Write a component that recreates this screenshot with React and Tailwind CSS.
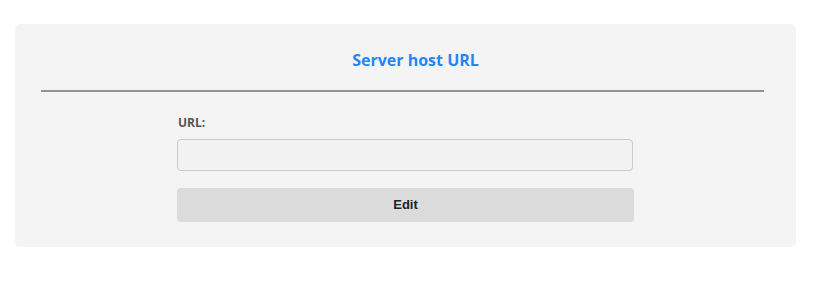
import React from 'react';

const App = () => {
  return (
    <div className="min-h-[281px] bg-white pt-6 px-[15px] [font-family:'Open_Sans',sans-serif]">
      <div className="w-[781px] rounded-[5px] bg-[#f4f4f4] pt-[25px] pb-[25px]">
        {/* Header */}
        <h2 className="pl-[20px] text-center text-[16px] leading-[22px] font-bold text-[#1e88f5]">
          Server host URL
        </h2>
        <div className="ml-[26px] mr-[32px] mt-[19px] h-[2px] bg-[#929292]" />

        {/* Form */}
        <div className="mx-auto mt-[23px] w-[457px]">
          <label className="block pl-[1px] text-[12px] leading-[16px] font-bold text-[#555]">URL:</label>
          <input
            type="text"
            className="mt-[8px] block h-[32px] w-[456px] rounded-[4px] border border-[#cbcbcb] bg-[#f2f2f2] px-2 text-sm outline-none"
          />
          <button className="mt-[17px] block h-[34px] w-full rounded-[4px] bg-[#dbdbdb] text-[13px] font-bold text-[#222] [font-family:'Liberation_Sans',Arial,sans-serif]">
            Edit
          </button>
        </div>
      </div>
    </div>
  );
};

export default App;
